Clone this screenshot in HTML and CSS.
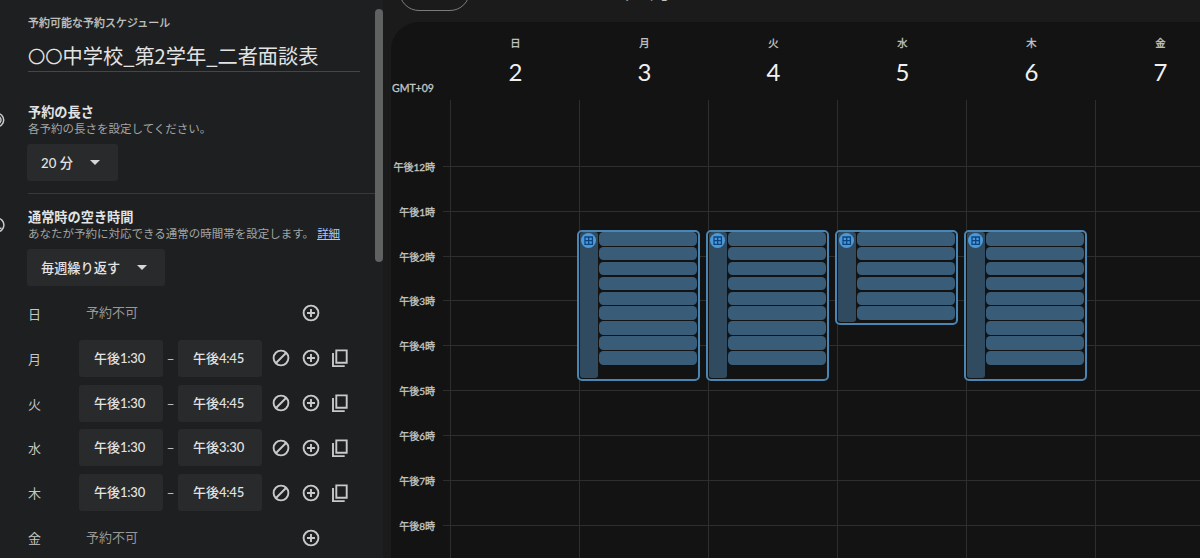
FILE: index.html
```html
<!DOCTYPE html>
<html lang="ja">
<head>
  <meta charset="UTF-8" />
  <meta name="viewport" content="width=device-width, initial-scale=1">
  <title>予約スケジュール</title>
  <link rel="stylesheet" href="styles.css">
</head>
<body>

  <!-- ICONS -->
  <svg class="defs">
    <symbol id="plus" viewBox="0 0 20 20"><circle cx="10" cy="10" r="7.4"/><path d="M10 6v8M6 10h8"/></symbol>
    <symbol id="block" viewBox="0 0 20 20"><circle cx="10" cy="10" r="7.4"/><path d="M5 15L15 5"/></symbol>
    <symbol id="copy" viewBox="0 0 20 20"><path d="M6.3 2.4h10.4v12.4H6.3zM3 5v13.1h11.7"/></symbol>
    <symbol id="grid" viewBox="0 0 15 15"><path d="M4 4h7.4v7.4H4zM7.7 4v7.4M4 7.7h7.4"/></symbol>
  </svg>

  <div class="app">
    <!-- SETTINGS PANEL -->
    <div class="sidebar">
      <svg class="side-icon length-icon" viewBox="0 0 16 16"><circle cx="8" cy="8" r="6.7"/><circle cx="8" cy="8" r="4"/></svg>
      <svg class="side-icon clock-icon" viewBox="0 0 16 16"><circle cx="8" cy="8" r="6.9"/><path d="M8 4v6.5l4.5 1"/></svg>

      <div class="label">予約可能な予約スケジュール</div>
      <div class="title"><span class="maru">〇〇</span>中学校_第2学年_二者面談表</div>

      <div class="section">
        <div class="heading">予約の長さ</div>
        <div class="desc">各予約の長さを設定してください。</div>
        <div class="select"><span>20 分</span><i class="arrow"></i></div>
      </div>

      <div class="section hours-section">
        <div class="heading">通常時の空き時間</div>
        <div class="desc">あなたが予約に対応できる通常の時間帯を設定します。<a href="#">詳細</a></div>
        <div class="select repeat"><span>毎週繰り返す</span><i class="arrow"></i></div>
      </div>

      <div class="week">
        <div class="row off"><span class="day">日</span><span class="none">予約不可</span><svg><use href="#plus"/></svg></div>
        <div class="row"><span class="day">月</span><span class="time">午後<b>1:30</b></span><span class="dash">–</span><span class="time">午後<b>4:45</b></span><svg><use href="#block"/></svg><svg><use href="#plus"/></svg><svg><use href="#copy"/></svg></div>
        <div class="row"><span class="day">火</span><span class="time">午後<b>1:30</b></span><span class="dash">–</span><span class="time">午後<b>4:45</b></span><svg><use href="#block"/></svg><svg><use href="#plus"/></svg><svg><use href="#copy"/></svg></div>
        <div class="row"><span class="day">水</span><span class="time">午後<b>1:30</b></span><span class="dash">–</span><span class="time">午後<b>3:30</b></span><svg><use href="#block"/></svg><svg><use href="#plus"/></svg><svg><use href="#copy"/></svg></div>
        <div class="row"><span class="day">木</span><span class="time">午後<b>1:30</b></span><span class="dash">–</span><span class="time">午後<b>4:45</b></span><svg><use href="#block"/></svg><svg><use href="#plus"/></svg><svg><use href="#copy"/></svg></div>
        <div class="row off"><span class="day">金</span><span class="none">予約不可</span><svg><use href="#plus"/></svg></div>
      </div>
      <div class="scrollbar"></div>
    </div>

    <!-- CALENDAR -->
    <div class="main">
      <div class="topbar">
        <div class="today"></div>
        <div class="month">2025年3月</div>
      </div>

      <div class="calendar">
        <div class="cal-head">
          <div class="gmt">GMT+09</div>
          <div class="date"><span>日</span><b>2</b></div>
          <div class="date"><span>月</span><b>3</b></div>
          <div class="date"><span>火</span><b>4</b></div>
          <div class="date"><span>水</span><b>5</b></div>
          <div class="date"><span>木</span><b>6</b></div>
          <div class="date"><span>金</span><b>7</b></div>
        </div>

        <div class="cal-body">
          <div class="hours">
            <div class="hour first"><span>午後12時</span></div>
            <div class="hour"><span>午後1時</span></div>
            <div class="hour"><span>午後2時</span></div>
            <div class="hour"><span>午後3時</span></div>
            <div class="hour"><span>午後4時</span></div>
            <div class="hour"><span>午後5時</span></div>
            <div class="hour"><span>午後6時</span></div>
            <div class="hour"><span>午後7時</span></div>
            <div class="hour"><span>午後8時</span></div>
          </div>
          <div class="days">
            <div class="col"></div>
            <div class="col">
              <div class="event">
                <div class="bar"><svg><use href="#grid"/></svg></div>
                <div class="slots"><i></i><i></i><i></i><i></i><i></i><i></i><i></i><i></i><i></i></div>
              </div>
            </div>
            <div class="col">
              <div class="event">
                <div class="bar"><svg><use href="#grid"/></svg></div>
                <div class="slots"><i></i><i></i><i></i><i></i><i></i><i></i><i></i><i></i><i></i></div>
              </div>
            </div>
            <div class="col">
              <div class="event short">
                <div class="bar"><svg><use href="#grid"/></svg></div>
                <div class="slots"><i></i><i></i><i></i><i></i><i></i><i></i></div>
              </div>
            </div>
            <div class="col">
              <div class="event">
                <div class="bar"><svg><use href="#grid"/></svg></div>
                <div class="slots"><i></i><i></i><i></i><i></i><i></i><i></i><i></i><i></i><i></i></div>
              </div>
            </div>
            <div class="col"></div>
          </div>
        </div>
      </div>
    </div>
  </div>

</body>
</html>
```

FILE: styles.css
```css
* {
  box-sizing: border-box;
}

body {
  margin: 0;
  background: #1b1b1b;
  color: #e3e3e3;
  font-family: Lato, "Noto Sans CJK JP", sans-serif;
  overflow: hidden;
}

b, i {
  font-weight: inherit;
  font-style: normal;
}

svg {
  fill: none;
  stroke: #c8caca;
  stroke-width: 1.9;
}

.defs {
  display: none;
}

.app {
  display: flex;
  height: 558px;
  overflow: hidden;
}

/* settings panel */
.sidebar {
  position: relative;
  flex: none;
  width: 383px;
  padding: 16px 0 0 28px;
  background: #1e1f20;
  overflow: hidden;
}

.side-icon {
  position: absolute;
  left: -11px;
  width: 16px;
  height: 16px;
  stroke-width: 1.5;
}

.length-icon { top: 112px; }
.clock-icon { top: 217px; }

.label {
  font-size: 10.9px;
  letter-spacing: 0.1px;
  line-height: 14px;
  color: #c4c7c5;
  -webkit-text-stroke: 0.3px;
}

.title {
  width: 332px;
  height: 42px;
  padding-top: 10px;
  border-bottom: 1px solid #444647;
  font-family: "Noto Sans CJK JP", sans-serif;
  font-size: 20.2px;
  line-height: 31px;
  white-space: nowrap;
}

.maru {
  font-size: 17.3px;
  line-height: 1;
  vertical-align: 1px;
}

.section {
  height: 90px;
  margin-top: 31px;
}

.hours-section {
  height: 98px;
  margin-top: 0;
  padding-top: 14px;
  border-top: 1px solid #38393a;
  width: 347px;
}

.heading {
  font-size: 13.2px;
  font-weight: 700;
  line-height: 18px;
}

.desc {
  font-size: 11.5px;
  line-height: 16px;
  color: #a2a5a4;
  white-space: nowrap;
}

.desc a {
  color: #a8c7fa;
  margin-left: 3px;
}

.select {
  display: flex;
  align-items: center;
  justify-content: space-between;
  width: 91px;
  height: 37px;
  margin: 7px 0 0 -1px;
  padding: 0 18px 1px 14px;
  background: #282a2b;
  border-radius: 3px;
  font-size: 13.2px;
  font-weight: 500;
}

.repeat {
  width: 138px;
}

.arrow {
  border: 5px solid transparent;
  border-top-color: #d5d7d7;
  border-bottom: 0;
}

.row {
  display: flex;
  align-items: center;
  height: 44.85px;
}

.row svg {
  width: 20px;
  height: 20px;
  margin-right: 9.6px;
}

.day {
  width: 51px;
  font-size: 13px;
  color: #c4c7c5;
}

.time {
  width: 84px;
  height: 37px;
  padding-right: 3px;
  border-radius: 3px;
  background: #282a2b;
  font-size: 13px;
  font-weight: 500;
  line-height: 36px;
  text-align: center;
}

.time b {
  letter-spacing: -0.2px;
}

.dash {
  width: 15px;
  text-align: center;
  font-size: 14px;
  color: #c4c7c5;
}

.time + svg {
  margin-left: 9px;
}

.none {
  width: 215px;
  padding: 0 0 3px 7px;
  font-size: 13px;
  color: #969998;
}

.off svg {
  margin-left: 7px;
}

.scrollbar {
  position: absolute;
  top: 9px;
  left: 375px;
  width: 8px;
  height: 253px;
  border-radius: 4px;
  background: #606161;
}

/* calendar */
.main {
  flex: 1;
  min-width: 0;
  padding-left: 8px;
}

.topbar {
  display: flex;
  align-items: flex-end;
  height: 22px;
}

.today {
  width: 71px;
  height: 40px;
  margin: 0 0 11px 8px;
  border: 1px solid #7b7d7c;
  border-radius: 20px;
}

.month {
  margin: 0 0 16px 94px;
  font-size: 22px;
  line-height: 32px;
  white-space: nowrap;
}

.calendar {
  width: 860px;
  height: 536px;
  background: #131313;
  border-top-left-radius: 28px;
  overflow: hidden;
}

.cal-head {
  display: flex;
  height: 78px;
}

.gmt {
  flex: none;
  width: 60px;
  padding: 59px 0 0 1px;
  font-size: 10.5px;
  line-height: 14px;
  color: #c4c7c5;
  -webkit-text-stroke: 0.3px;
}

.date {
  display: flex;
  flex-direction: column;
  align-items: center;
  flex: none;
  width: 129px;
  padding-top: 14px;
  font-size: 10.3px;
  line-height: 14px;
  color: #c4c7c5;
}

.date span {
  -webkit-text-stroke: 0.3px;
}

.date b {
  margin-top: 5px;
  color: #f0f0f0;
  font-size: 24px;
  line-height: 34px;
}

.cal-body {
  display: grid;
}

.hours, .days {
  grid-area: 1 / 1;
}

.hour {
  display: flex;
  align-items: flex-end;
  height: 44.83px;
  background: linear-gradient(#2d2e2e, #2d2e2e) 52px 100% / 100% 1px no-repeat;
}

.hour.first {
  height: 67px;
}

.hour span {
  width: 44px;
  margin-bottom: -7px;
  font-size: 10.1px;
  letter-spacing: -0.1px;
  line-height: 14px;
  text-align: right;
  white-space: nowrap;
  color: #c4c7c5;
  -webkit-text-stroke: 0.3px;
}

.days {
  display: flex;
  height: 460px;
  padding-left: 59px;
}

.col {
  position: relative;
  flex: none;
  width: 129px;
  border-left: 1px solid #2d2e2e;
}

/* bookable block lies over the grid lines */
.event {
  position: absolute;
  top: 129.5px;
  left: -3px;
  display: flex;
  gap: 1.5px;
  width: 123px;
  height: 151.5px;
  padding: 0.5px 1px 1px;
  border: 2px solid #4a86b3;
  border-radius: 5px;
  background: #131313;
}

.event.short {
  height: 95px;
}

.bar {
  width: 17.5px;
  background: #304a5f;
  border-radius: 3px;
}

.bar svg {
  display: block;
  width: 15px;
  height: 15px;
  margin: 1px 0 0 1px;
  border-radius: 50%;
  background: #4b99d8;
  stroke: #0b4581;
  stroke-width: 1.3;
}

.slots {
  flex: 1;
}

.slots i {
  display: block;
  height: 13.5px;
  margin-bottom: 1.4px;
  border-radius: 4.5px;
  background: #395d79;
}
```
